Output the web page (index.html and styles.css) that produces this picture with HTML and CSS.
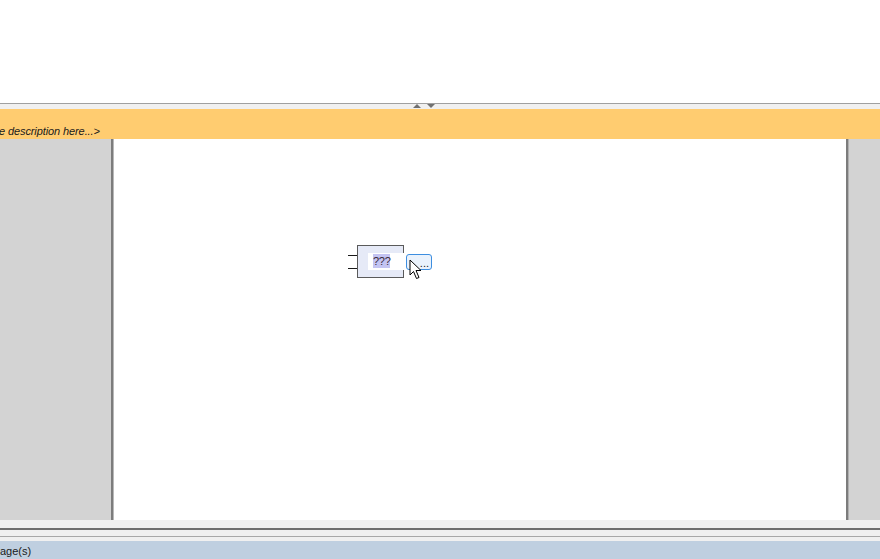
FILE: index.html
```html
<!DOCTYPE html>
<html lang="en">
<head>
    <meta charset="UTF-8">
    <meta name="viewport" content="width=device-width, initial-scale=1.0">
    <title>Block Diagram Editor</title>
    <link rel="stylesheet" href="styles.css">
</head>
<body>
    <div class="top-pane"></div>

    <div class="splitter">
        <span class="arrow-up"></span>
        <span class="arrow-down"></span>
    </div>

    <div class="description">e description here...&gt;</div>

    <div class="workspace">
        <div class="side-left"></div>
        <div class="sheet">
            <!-- new block being edited -->
            <div class="block">
                <span class="pin pin-1"></span>
                <span class="pin pin-2"></span>
                <div class="block-edit"><span class="selected">???</span></div>
            </div>
            <div class="more-btn">...</div>
            <svg class="cursor" width="14" height="21" viewBox="0 0 14 21">
                <path d="M1 1 L1 16 L4.5 12.5 L7.5 19.5 L10 18.5 L7 11.5 L12 11.5 Z" fill="#fff" stroke="#000" stroke-width="1" stroke-linejoin="miter"/>
            </svg>
        </div>
        <div class="side-right"></div>
    </div>

    <div class="bottom-splitter">
        <div class="rule-dark"></div>
        <div class="rule-light"></div>
    </div>

    <div class="status-bar">age(s)</div>
</body>
</html>
```

FILE: styles.css
```css
body {
    margin: 0;
    width: 880px;
    height: 559px;
    overflow: hidden;
    font-family: "Liberation Sans", Arial, sans-serif;
    font-size: 11px;
    background: #fff;
}
.top-pane {
    height: 103px;
    background: #fff;
}
.splitter {
    height: 5px;
    border-top: 1px solid #a0a0a0;
    background: #f0f0f0;
    display: flex;
    align-items: flex-start;
    gap: 6px;
    padding-left: 413px;
}
.arrow-up {
    width: 0;
    height: 0;
    border-left: 4px solid transparent;
    border-right: 4px solid transparent;
    border-bottom: 4px solid #707070;
}
.arrow-down {
    width: 0;
    height: 0;
    border-left: 4px solid transparent;
    border-right: 4px solid transparent;
    border-top: 4px solid #707070;
}
.description {
    height: 30px;
    background: #ffcc70;
    font-style: italic;
    color: #1a1a1a;
    line-height: 15px;
    padding-top: 15px;
    box-sizing: border-box;
    margin-left: -1px;
    letter-spacing: -0.1px;
    white-space: nowrap;
}
.workspace {
    height: 381px;
    display: flex;
}
.side-left {
    width: 111px;
    background: #d3d3d3;
}
.side-right {
    flex: 1;
    background: #d3d3d3;
}
.sheet {
    position: relative;
    width: 733px;
    background: #fff;
    border-left: 2px solid #7c7c7c;
    border-right: 2px solid #7c7c7c;
    box-shadow: inset 1px 0 #b8b8b8, 1px 0 #b0b0b0;
}
.block {
    position: absolute;
    left: 244px;
    top: 106px;
    width: 45px;
    height: 31px;
    border: 1px solid #5a5a5a;
    background: #e6eaf7;
}
.pin {
    position: absolute;
    left: -10px;
    width: 9px;
    height: 1px;
    background: #1a1a1a;
}
.pin-1 {
    top: 9px;
}
.pin-2 {
    top: 22px;
}
.block-edit {
    position: absolute;
    left: 10px;
    top: 7px;
    width: 37px;
    height: 17px;
    background: #fff;
    line-height: 17px;
}
.selected {
    margin-left: 5px;
    padding: 1px 0;
    background: #c4c4f2;
    color: #3a2a3a;
    font-size: 11px;
    letter-spacing: -0.3px;
}
.more-btn {
    position: absolute;
    left: 293px;
    top: 115px;
    width: 22px;
    height: 14px;
    border: 1px solid #3d8ee0;
    border-radius: 3px;
    background: #eaf2fc;
    color: #222;
    font-size: 11px;
    line-height: 16px;
    text-align: right;
    padding-right: 2px;
    box-sizing: content-box;
}
.cursor {
    position: absolute;
    left: 296px;
    top: 120px;
}
.bottom-splitter {
    height: 21px;
    background: #f0f0f0;
    box-sizing: border-box;
    padding-top: 8px;
}
.rule-dark {
    height: 2px;
    background: #6e6e6e;
    margin-bottom: 6px;
}
.rule-light {
    height: 1px;
    background: #a8a8a8;
}
.status-bar {
    height: 18px;
    background: #bfcfe0;
    color: #1a1a1a;
    line-height: 18px;
    padding-top: 1px;
    box-sizing: border-box;
}
```
